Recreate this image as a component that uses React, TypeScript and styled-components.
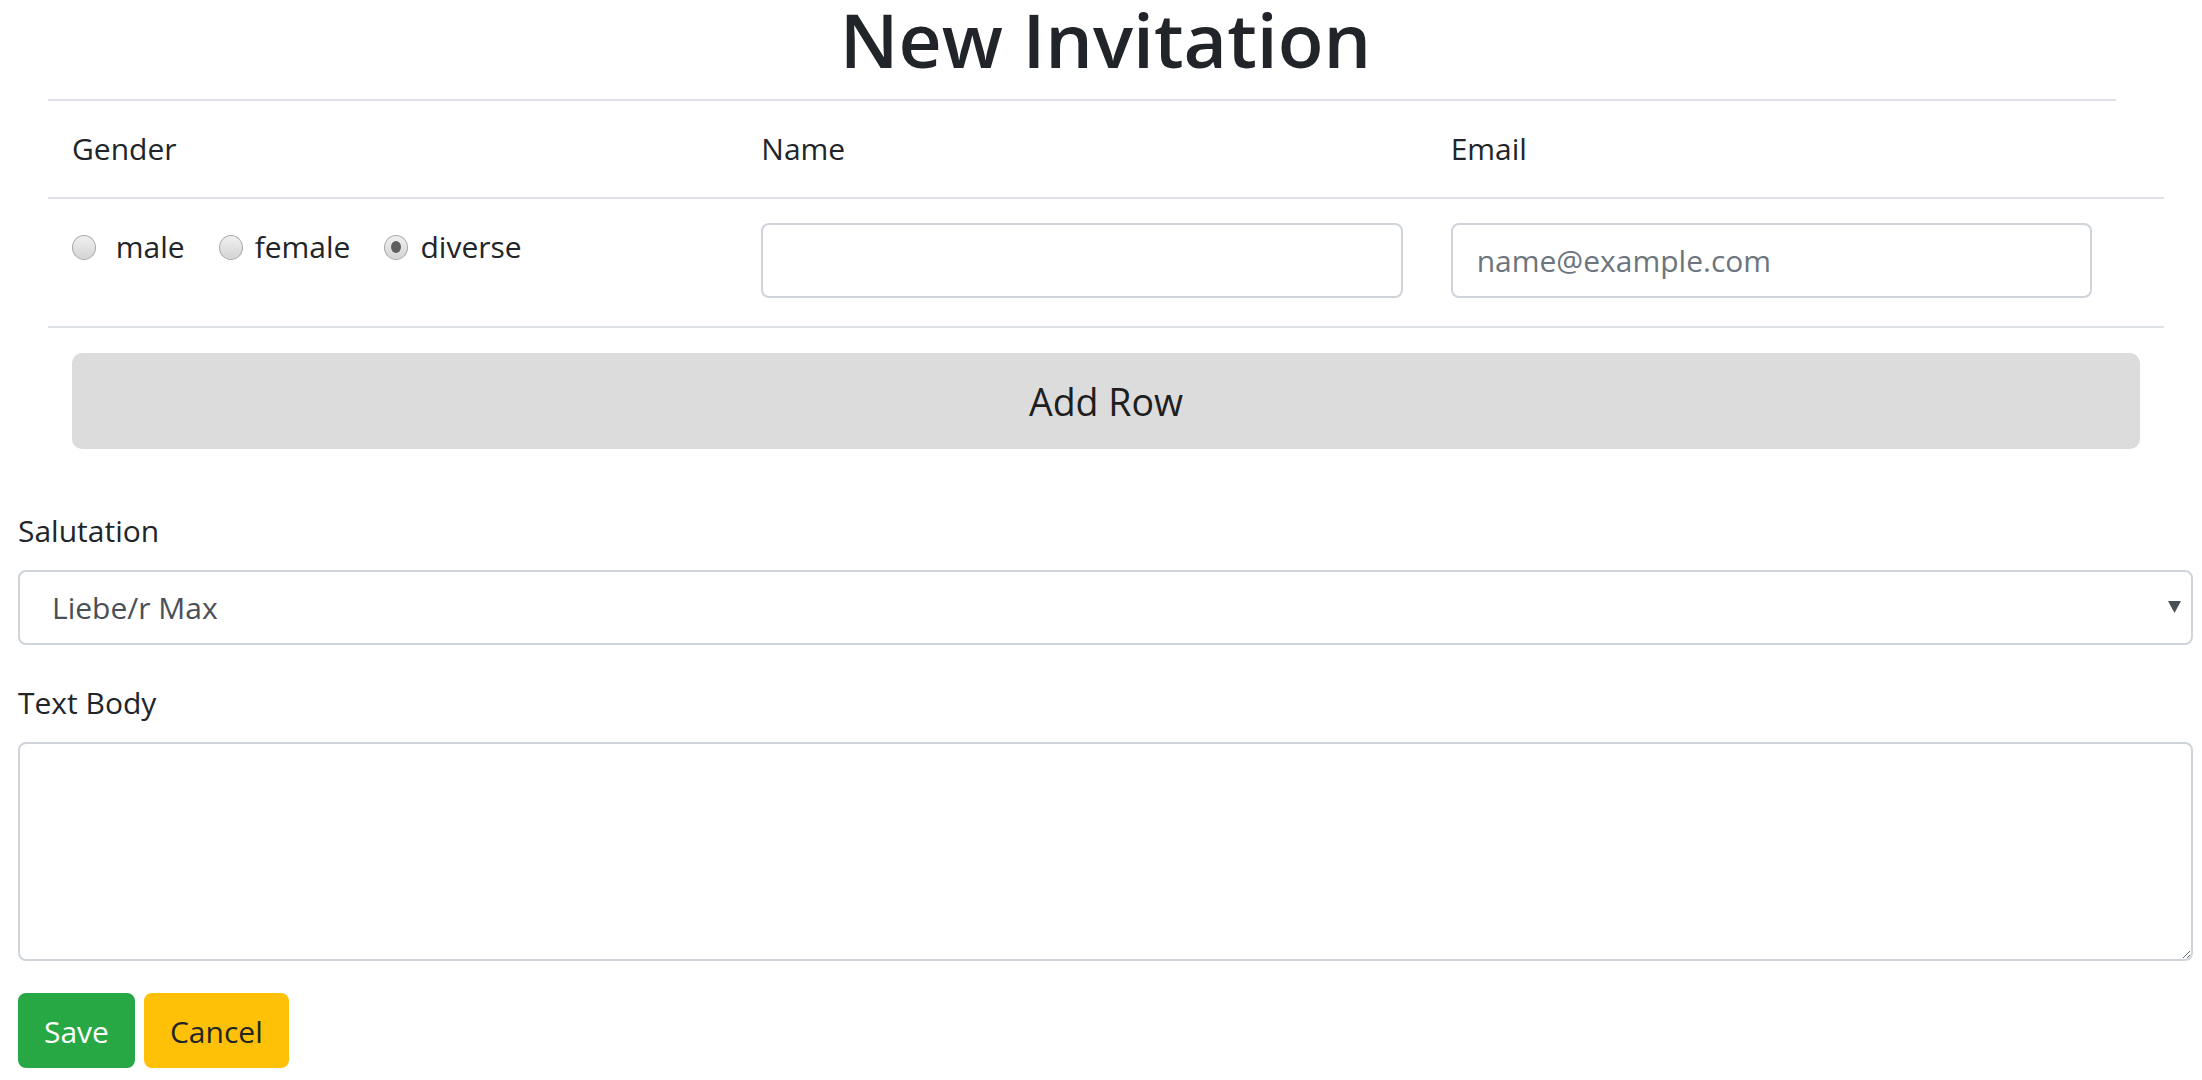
import React from "react";
import styled, { createGlobalStyle } from "styled-components";

const GlobalStyle = createGlobalStyle`
  html, body { margin: 0; padding: 0; background: #ffffff; }
  body {
    font-family: "Open Sans", "Noto Sans", "Liberation Sans", sans-serif;
    color: #212529;
    font-size: 30px;
    line-height: 48px;
  }
  *, *::before, *::after { box-sizing: border-box; }
`;

const Page = styled.div`
  padding: 0 9px 0 18px;
`;

const Title = styled.h1`
  margin: 0 0 21px;
  text-align: center;
  font-size: 75px;
  line-height: 78px;
  font-weight: 600;
  color: #212529;
`;

const Table = styled.div`
  margin: 0 29px 32px 30px;
`;

const Row = styled.div<{ $border?: boolean }>`
  display: grid;
  grid-template-columns: repeat(3, 1fr) 48px;
  border-top: ${(p) => (p.$border ? "2px solid #dee2e6" : "none")};
`;

const HeadCell = styled.div<{ $blank?: boolean }>`
  padding: 24px;
  line-height: 48px;
  font-weight: 400;
  border-top: ${(p) => (p.$blank ? "none" : "2px solid #dee2e6")};
`;

const Cell = styled.div`
  padding: 24px 24px 28px;
  min-width: 0;
`;

const WideCell = styled.div`
  grid-column: span 4;
  padding: 25px 24px 24px;
`;

const RadioGroup = styled.div`
  display: flex;
  align-items: center;
  height: 48px;
`;

const RadioItem = styled.label`
  display: inline-flex;
  align-items: center;
  margin-right: 34px;
  white-space: pre;
  cursor: pointer;
`;

const Radio = styled.input.attrs({ type: "radio" })`
  appearance: none;
  -webkit-appearance: none;
  width: 24px;
  height: 25px;
  margin: 0 12px 0 0;
  border-radius: 50%;
  border: 1px solid #a9a9a9;
  background: linear-gradient(#f0f0f0, #d4d4d4);
  display: grid;
  place-content: center;
  flex: none;
  &:checked::before {
    content: "";
    display: block;
    width: 10px;
    height: 12px;
    border-radius: 50%;
    background: #5e5e5e;
  }
`;

const TextInput = styled.input`
  display: block;
  width: 100%;
  height: 75px;
  padding: 0 24px;
  border: 2px solid #ced4da;
  border-radius: 8px;
  font: inherit;
  font-size: 30px;
  color: #495057;
  background: #fff;
  &::placeholder { color: #6c757d; }
`;

const AddButton = styled.button`
  display: block;
  width: 100%;
  height: 96px;
  border: none;
  border-radius: 10px;
  background: #dcdcdc;
  color: #1e1e1e;
  font: inherit;
  font-size: 37.5px;
  line-height: 60px;
  padding-top: 3px;
  cursor: pointer;
`;

const Group = styled.div`
  margin-bottom: 32px;
`;

const Label = styled.label`
  display: block;
  line-height: 48px;
  padding-top: 2px;
  margin-bottom: 15px;
`;

const SelectWrap = styled.div`
  position: relative;
`;

const Select = styled.select`
  display: block;
  width: 100%;
  height: 75px;
  padding: 0 40px 0 32px;
  border: 2px solid #ced4da;
  border-radius: 8px;
  appearance: none;
  -webkit-appearance: none;
  background: #fff;
  font: inherit;
  font-size: 30px;
  color: #495057;
`;

const Arrow = styled.svg`
  position: absolute;
  right: 12px;
  top: 31px;
  width: 13px;
  height: 12px;
  pointer-events: none;
`;

const TextArea = styled.textarea`
  display: block;
  width: 100%;
  height: 219px;
  padding: 12px 24px;
  border: 2px solid #ced4da;
  border-radius: 8px;
  font: inherit;
  font-size: 30px;
  color: #495057;
  resize: vertical;
`;

const Actions = styled.div`
  display: flex;
  gap: 9px;
`;

const ActionButton = styled.button<{ $variant: "save" | "cancel" }>`
  height: 75px;
  padding: 2px 24px 0;
  border: 2px solid ${(p) => (p.$variant === "save" ? "#28a745" : "#ffc107")};
  border-radius: 8px;
  background: ${(p) => (p.$variant === "save" ? "#28a745" : "#ffc107")};
  color: ${(p) => (p.$variant === "save" ? "#ffffff" : "#212529")};
  font: inherit;
  font-size: 30px;
  line-height: 48px;
  cursor: pointer;
`;

export default function App() {
  const [gender, setGender] = React.useState("diverse");
  return (
    <>
      <GlobalStyle />
      <Page>
        <Title>New Invitation</Title>
        <Table>
          <Row>
            <HeadCell>Gender</HeadCell>
            <HeadCell>Name</HeadCell>
            <HeadCell>Email</HeadCell>
            <HeadCell $blank />
          </Row>
          <Row $border>
            <Cell>
              <RadioGroup>
                {[
                  { v: "male", t: " male" },
                  { v: "female", t: "female" },
                  { v: "diverse", t: "diverse" },
                ].map((o) => (
                  <RadioItem key={o.v}>
                    <Radio
                      name="gender"
                      checked={gender === o.v}
                      onChange={() => setGender(o.v)}
                    />
                    {o.t}
                  </RadioItem>
                ))}
              </RadioGroup>
            </Cell>
            <Cell>
              <TextInput type="text" />
            </Cell>
            <Cell>
              <TextInput type="email" placeholder="name@example.com" />
            </Cell>
            <Cell />
          </Row>
          <Row $border>
            <WideCell>
              <AddButton type="button">Add Row</AddButton>
            </WideCell>
          </Row>
        </Table>
        <Group>
          <Label>Salutation</Label>
          <SelectWrap>
            <Select defaultValue="max">
              <option value="max">Liebe/r Max</option>
            </Select>
            <Arrow viewBox="0 0 13 12">
              <path d="M0 0 H13 L6.5 12 Z" fill="#495057" />
            </Arrow>
          </SelectWrap>
        </Group>
        <Group>
          <Label>Text Body</Label>
          <TextArea />
        </Group>
        <Actions>
          <ActionButton $variant="save">Save</ActionButton>
          <ActionButton $variant="cancel">Cancel</ActionButton>
        </Actions>
      </Page>
    </>
  );
}
